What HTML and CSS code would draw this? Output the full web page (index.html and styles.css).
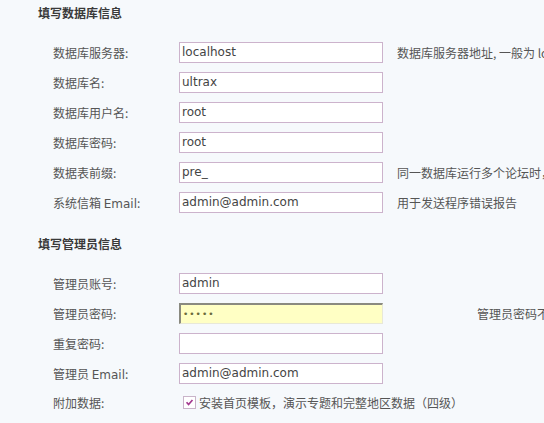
FILE: index.html
```html
<!DOCTYPE html>
<html lang="zh-CN">
<head>
<meta charset="utf-8">
<title>安装</title>
<link rel="stylesheet" href="styles.css">
</head>
<body>
<div class="page">
  <section class="group">
    <h2 class="group-title">填写数据库信息</h2>
    <div class="row">
      <label class="label">数据库服务器:</label>
      <input class="field" type="text" value="localhost">
      <span class="hint">数据库服务器地址, 一般为 localhost</span>
    </div>
    <div class="row">
      <label class="label">数据库名:</label>
      <input class="field" type="text" value="ultrax">
    </div>
    <div class="row">
      <label class="label">数据库用户名:</label>
      <input class="field" type="text" value="root">
    </div>
    <div class="row">
      <label class="label">数据库密码:</label>
      <input class="field" type="text" value="root">
    </div>
    <div class="row">
      <label class="label">数据表前缀:</label>
      <input class="field" type="text" value="pre_">
      <span class="hint">同一数据库运行多个论坛时，请修改前缀</span>
    </div>
    <div class="row">
      <label class="label">系统信箱 <span class="latin">Email</span>:</label>
      <input class="field" type="text" value="admin@admin.com">
      <span class="hint">用于发送程序错误报告</span>
    </div>
  </section>
  <section class="group group-second">
    <h2 class="group-title">填写管理员信息</h2>
    <div class="row">
      <label class="label">管理员账号:</label>
      <input class="field" type="text" value="admin">
    </div>
    <div class="row">
      <label class="label">管理员密码:</label>
      <input class="field field-focus" type="text" value="•••••">
      <span class="hint hint-far">管理员密码不能为空</span>
    </div>
    <div class="row">
      <label class="label">重复密码:</label>
      <input class="field" type="text" value="">
    </div>
    <div class="row">
      <label class="label">管理员 <span class="latin">Email</span>:</label>
      <input class="field" type="text" value="admin@admin.com">
    </div>
    <div class="row row-check">
      <label class="label">附加数据:</label>
      <span class="check-wrap">
        <span class="checkbox"><svg viewBox="0 0 13 13" width="13" height="13"><path d="M3 6.2 L5.4 8.8 L10 3.6" fill="none" stroke="#a3398f" stroke-width="2"/></svg></span>
        <span class="check-text">安装首页模板，演示专题和完整地区数据（四级）</span>
      </span>
    </div>
  </section>
</div>
</body>
</html>
```
FILE: styles.css
```css
html, body {
  margin: 0;
  padding: 0;
  background: #f6f9fc;
  overflow: hidden;
}
body {
  font-family: "Noto Sans CJK SC", "DejaVu Sans", sans-serif;
  font-size: 12px;
  color: #555;
  width: 544px;
  height: 423px;
}
.page {
  width: 544px;
  overflow: hidden;
  white-space: nowrap;
}
.group {
  padding-left: 38px;
}
.group-second {
  margin-top: 14px;
}
.group-title {
  margin: 0 0 12px 0;
  font-size: 12px;
  line-height: 25px;
  font-weight: bold;
  color: #3a3a3a;
}
.row {
  display: flex;
  align-items: center;
  height: 30px;
  padding-left: 15px;
}
.label {
  width: 126px;
  flex: none;
  color: #555;
}
.latin {
  font-family: "DejaVu Sans", sans-serif;
  font-size: 12px;
}
.field {
  box-sizing: border-box;
  width: 204px;
  height: 21px;
  flex: none;
  margin: 0;
  padding: 0 2px;
  border: 1px solid #ccb3cc;
  background: #fff;
  font-family: "DejaVu Sans", sans-serif;
  font-size: 12px;
  color: #444;
  outline: none;
}
.field-focus {
  background: #ffffc4;
  border-top: 2px solid #8a8a80;
  border-left: 2px solid #8a8a80;
  border-right: 1px solid #e8e8d8;
  border-bottom: 1px solid #e8e8d8;
  color: #6b6b3a;
  font-size: 9px;
  letter-spacing: 1px;
  padding-left: 2px;
}
.hint {
  margin-left: 14px;
  color: #555;
}
.hint-far {
  margin-left: 94px;
}
.row-check {
  height: 28px;
}
.check-wrap {
  display: flex;
  align-items: center;
  margin-left: 4px;
}
.checkbox {
  box-sizing: border-box;
  width: 13px;
  height: 13px;
  border: 1px solid #c9b4c9;
  background: #fff;
  display: flex;
  align-items: center;
  justify-content: center;
}
.checkbox svg {
  display: block;
  width: 11px;
  height: 11px;
}
.check-text {
  margin-left: 3px;
  font-size: 12px;
  color: #555;
}
```
